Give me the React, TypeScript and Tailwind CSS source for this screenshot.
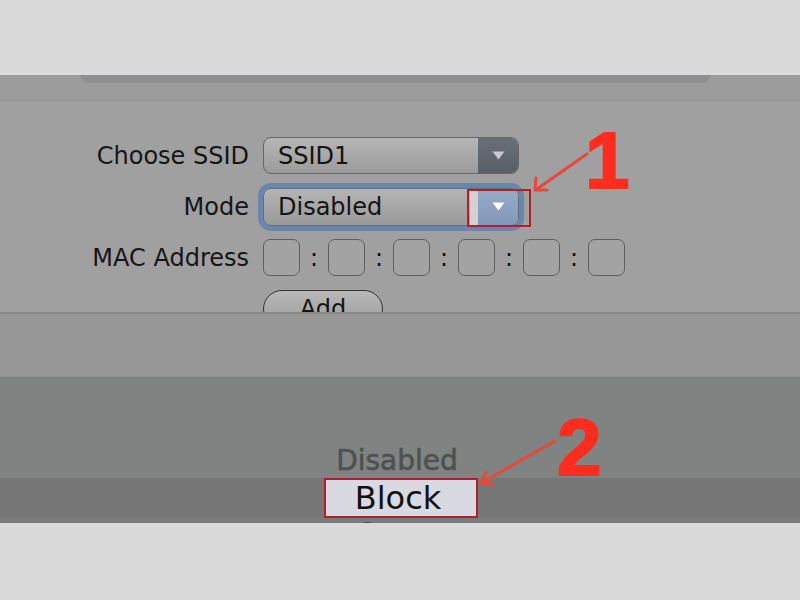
import React from 'react';

const font = { fontFamily: '"DejaVu Sans", Verdana, sans-serif' };

const Triangle = ({ color }: { color: string }) => (
  <svg width="13" height="9" viewBox="0 0 13 9">
    <path d="M0.5 0.5 L12.5 0.5 L6.5 8.5 Z" fill={color} />
  </svg>
);

const Label = ({ children }: { children: React.ReactNode }) => (
  <div className="w-[249px] text-right text-[24px] leading-none text-[#161616]">{children}</div>
);

export default function App() {
  const macs = [0, 1, 2, 3, 4, 5];

  return (
    <div className="relative w-[800px] h-[600px] overflow-hidden flex flex-col" style={font}>
      {/* top band */}
      <div className="h-[75px] bg-[#dadada] shrink-0" />

      {/* bottom of the panel above */}
      <div className="h-[26px] shrink-0 bg-[#9c9c9c] border-b border-[#919191]">
        <div className="ml-[80px] w-[630px] h-[8px] rounded-b-[12px] bg-[#8f8f91]" />
      </div>

      {/* form */}
      <div className="h-[211px] shrink-0 bg-[#a0a0a0] overflow-hidden pt-[29px] flex flex-col">
        <div className="h-[51px] shrink-0 flex items-center">
          <Label>Choose SSID</Label>
          <div className="ml-[14px] w-[256px] h-[37px] rounded-[8px] border border-[#666] bg-gradient-to-b from-[#b6b6b6] to-[#9b9b9b] flex items-center overflow-hidden">
            <span className="flex-1 pl-[14px] text-[24px] leading-none text-[#141414]">SSID1</span>
            <div className="w-[40px] h-full bg-gradient-to-b from-[#6a7078] to-[#585e66] flex items-center justify-center">
              <Triangle color="#c6cace" />
            </div>
          </div>
        </div>

        <div className="h-[51px] shrink-0 flex items-center">
          <Label>Mode</Label>
          <div className="relative ml-[14px]">
            <div className="w-[256px] h-[38px] rounded-[8px] border border-[#5a6f8e] ring-[5px] ring-[#6c86aa] bg-gradient-to-b from-[#b4b4b4] to-[#9a9a9a] flex items-center overflow-hidden">
              <span className="flex-1 pl-[14px] text-[24px] leading-none text-[#141414]">Disabled</span>
              <div className="w-[8px] h-full bg-[#d2d2d4]" />
              <div className="w-[40px] h-full bg-gradient-to-b from-[#97abc8] to-[#8398b8] flex items-center justify-center">
                <Triangle color="#ffffff" />
              </div>
            </div>
            <div className="absolute left-[204px] top-[1px] w-[64px] h-[38px] border-2 border-[#b3202b]" />
          </div>
        </div>

        <div className="h-[51px] shrink-0 flex items-center">
          <Label>MAC Address</Label>
          <div className="ml-[14px] flex items-center">
            {macs.map((m) => (
              <React.Fragment key={m}>
                {m > 0 && <div className="w-[28px] text-center text-[24px] leading-none text-[#111]">:</div>}
                <div className="w-[37px] h-[37px] rounded-[7px] border-[1.5px] border-[#5e5e5e] bg-[#a3a3a3]" />
              </React.Fragment>
            ))}
          </div>
        </div>

        <div className="h-[51px] shrink-0 flex items-center">
          <div className="w-[249px]" />
          <div className="ml-[14px] w-[120px] h-[38px] rounded-full border-[1.5px] border-[#333] bg-gradient-to-b from-[#b8b8b8] to-[#9c9c9c] flex items-center justify-center text-[24px] leading-none text-[#141414]">
            Add
          </div>
        </div>
      </div>

      <div className="h-[2px] shrink-0 bg-[#898989]" />
      <div className="h-[63px] shrink-0 bg-[#979797] border-b border-[#8e908e]" />

      {/* picker */}
      <div className="h-[101px] shrink-0 bg-[#7f8381] flex items-end justify-center pb-[3px] pr-[6px]">
        <span className="text-[28px] leading-none text-[#4e5150] [-webkit-text-stroke:0.6px_#4e5150]">Disabled</span>
      </div>
      <div className="h-[40px] shrink-0 bg-[#777777] flex justify-center pl-[2px]">
        <div className="w-[154px] h-[40px] border-2 border-[#b01f2a] bg-[#d9dae1] flex items-center justify-center pr-[6px] text-[32px] leading-none text-[#111]">
          Block
        </div>
      </div>
      <div className="h-[5px] shrink-0 bg-[#7b7b7b] overflow-hidden flex justify-center pr-[6px]">
        <span className="text-[32px] leading-none text-[#4a4a4a]">Open</span>
      </div>
      <div className="flex-1 bg-[#dadada]" />

      {/* annotations */}
      <span className="absolute left-[585px] top-[121px] text-[80px] leading-none font-bold text-[#ff2d1f] [-webkit-text-stroke:2px_#ff2d1f]" style={{ fontFamily: '"Liberation Sans", Arial, sans-serif' }}>
        1
      </span>
      <span className="absolute left-[557px] top-[408px] text-[80px] leading-none font-bold text-[#ff2d1f] [-webkit-text-stroke:2px_#ff2d1f]" style={{ fontFamily: '"Liberation Sans", Arial, sans-serif' }}>
        2
      </span>
      <svg className="absolute inset-0 pointer-events-none" width="800" height="600">
        <g stroke="#e8483a" strokeWidth="3" fill="none" strokeLinecap="round" strokeLinejoin="round">
          <path d="M587 154 L537 189" />
          <path d="M536 178 L535 190 L547 190" />
          <path d="M555 441 L483 482" />
          <path d="M486 472 L481 483 L493 484" />
        </g>
      </svg>
    </div>
  );
}
